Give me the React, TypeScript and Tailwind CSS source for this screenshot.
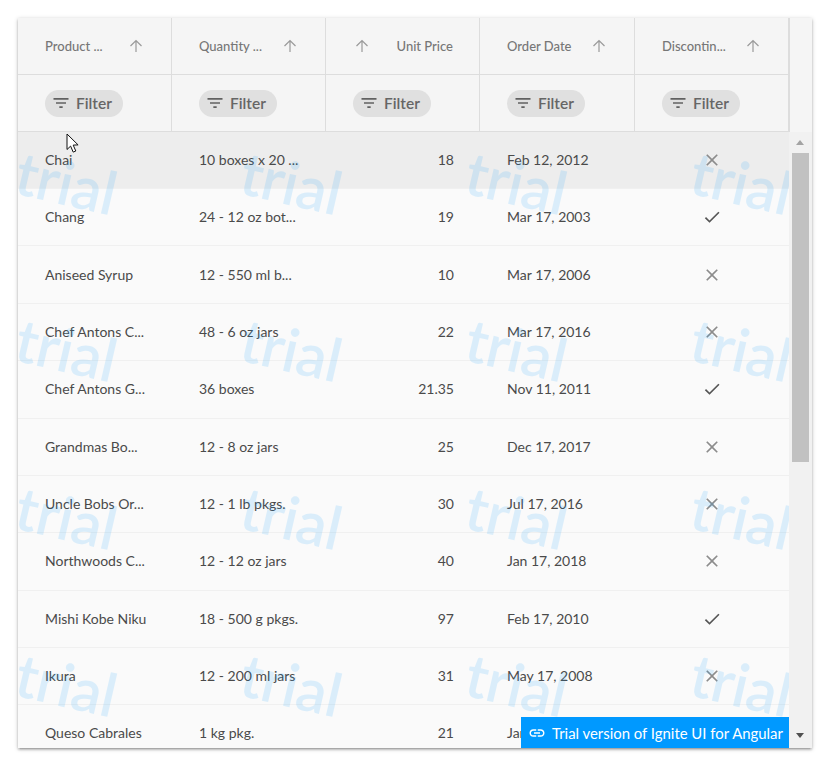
import React from "react";

const rows: { name: string; qty: string; price: string; date: string; ok: boolean }[] = [
  { name: "Chai", qty: "10 boxes x 20 ...", price: "18", date: "Feb 12, 2012", ok: false },
  { name: "Chang", qty: "24 - 12 oz bot...", price: "19", date: "Mar 17, 2003", ok: true },
  { name: "Aniseed Syrup", qty: "12 - 550 ml b...", price: "10", date: "Mar 17, 2006", ok: false },
  { name: "Chef Antons C...", qty: "48 - 6 oz jars", price: "22", date: "Mar 17, 2016", ok: false },
  { name: "Chef Antons G...", qty: "36 boxes", price: "21.35", date: "Nov 11, 2011", ok: true },
  { name: "Grandmas Bo...", qty: "12 - 8 oz jars", price: "25", date: "Dec 17, 2017", ok: false },
  { name: "Uncle Bobs Or...", qty: "12 - 1 lb pkgs.", price: "30", date: "Jul 17, 2016", ok: false },
  { name: "Northwoods C...", qty: "12 - 12 oz jars", price: "40", date: "Jan 17, 2018", ok: false },
  { name: "Mishi Kobe Niku", qty: "18 - 500 g pkgs.", price: "97", date: "Feb 17, 2010", ok: true },
  { name: "Ikura", qty: "12 - 200 ml jars", price: "31", date: "May 17, 2008", ok: false },
  { name: "Queso Cabrales", qty: "1 kg pkg.", price: "21", date: "Jan 17, 2011", ok: false },
];

const cols = "grid grid-cols-[154px_154px_154px_155px_154px]";

function ArrowUpIcon() {
  return (
    <svg width="18" height="18" viewBox="0 0 18 18" fill="none" stroke="#9a9a9a" strokeWidth="1.2" className="shrink-0">
      <path d="M9 15V3.5M3.5 9L9 3.5 14.5 9" />
    </svg>
  );
}

function FilterChip() {
  return (
    <div className="flex items-center w-[78px] h-[27px] rounded-full bg-[#e0e0e0] pl-[6px] gap-[5px] text-[15.5px] font-semibold text-[#666666]">
      <svg width="20" height="20" viewBox="0 0 24 24" fill="#616161" className="shrink-0">
        <path d="M10 18h4v-2h-4v2zM3 6v2h18V6H3zm3 7h12v-2H6v2z" />
      </svg>
      <span className="mt-[1px]">Filter</span>
    </div>
  );
}

function HeaderCell({ label, right }: { label: string; right?: boolean }) {
  return (
    <div className="flex items-center justify-between h-[57px] border-r border-b border-[#dddddd] pl-[27px] pr-[26px] text-[13px] font-medium text-[#777777]">
      {right ? (
        <>
          <ArrowUpIcon />
          <span className="mt-[1px]">{label}</span>
        </>
      ) : (
        <>
          <span className="mt-[1px]">{label}</span>
          <ArrowUpIcon />
        </>
      )}
    </div>
  );
}

export default function App() {
  return (
    <div className="w-[830px] h-[782px] bg-white pt-[18px] pl-[18px] font-['Lato','Liberation_Sans',sans-serif]">
      <div className="relative flex flex-col w-[794px] h-[730px] bg-[#f5f5f5] shadow-[0_1px_4px_0_rgba(0,0,0,0.26),0_2px_2px_0_rgba(0,0,0,0.14),0_3px_1px_-2px_rgba(0,0,0,0.1)]">
        <div className="flex flex-col w-[771px] border-r border-[#dddddd] box-content">
          <div className={cols}>
            <HeaderCell label="Product ..." />
            <HeaderCell label="Quantity ..." />
            <HeaderCell label="Unit Price" right />
            <HeaderCell label="Order Date" />
            <HeaderCell label="Discontin..." />
          </div>
          <div className={cols}>
            {[0, 1, 2, 3, 4].map((i) => (
              <div key={i} className="flex items-center h-[57px] border-r border-b border-[#dddddd] pl-[27px]">
                <FilterChip />
              </div>
            ))}
          </div>
        </div>
        <div className="flex flex-1 min-h-0">
          <div className="relative w-[771px] overflow-hidden bg-[#fafafa]">
            <div className="mt-[-0.3px]">
              {rows.map((r, i) => (
                <div key={r.name} className={`${cols} h-[57.36px] items-center border-b border-[#f0f0f0] text-[14px] text-[#4a4a4a] ${i === 0 ? "bg-[#ededed]" : ""}`}>
                  <div className="pl-[27px] pb-[1px] whitespace-nowrap">{r.name}</div>
                  <div className="pl-[27px] pb-[1px] whitespace-nowrap">{r.qty}</div>
                  <div className="pr-[26px] pb-[1px] text-right">{r.price}</div>
                  <div className="pl-[27px] pb-[1px] whitespace-nowrap">{r.date}</div>
                  <div className="flex justify-center">
                    {r.ok ? (
                      <svg width="20" height="20" viewBox="0 0 24 24" fill="#555555">
                        <path d="M9 16.17L4.83 12l-1.42 1.41L9 19 21 7l-1.41-1.41z" />
                      </svg>
                    ) : (
                      <svg width="20" height="20" viewBox="0 0 24 24" fill="#8c8c8c">
                        <path d="M19 6.41L17.59 5 12 10.59 6.41 5 5 6.41 10.59 12 5 17.59 6.41 19 12 13.41 17.59 19 19 17.59 13.41 12z" />
                      </svg>
                    )}
                  </div>
                </div>
              ))}
            </div>
            <div className="absolute left-[-63.5px] top-[-34px] grid grid-cols-[225px_225px_225px_225px] auto-rows-[167.5px] pointer-events-none">
              {Array.from({ length: 16 }).map((_, i) => (
                <div key={i} className="flex items-center justify-center">
                  <span className="rotate-[13deg] text-[60px] leading-none font-semibold tracking-[-0.5px] text-[#0099ff] opacity-[0.12]">trial</span>
                </div>
              ))}
            </div>
          </div>
          <div className="flex flex-col items-center w-[23px] bg-[#f1f1f1] pr-[1px]">
            <div className="flex items-center justify-center h-[21px] w-full">
              <div className="w-0 h-0 border-x-[4.5px] border-x-transparent border-b-[5px] border-b-[#a3a3a3]" />
            </div>
            <div className="w-[17px] h-[309px] bg-[#c1c1c1]" />
            <div className="flex-1" />
            <div className="flex items-center justify-center h-[26px] w-full">
              <div className="w-0 h-0 border-x-[4.5px] border-x-transparent border-t-[5px] border-t-[#505050]" />
            </div>
          </div>
        </div>
        <div className="absolute right-[23px] bottom-0 flex items-center w-[268px] h-[31px] bg-[#0099ff] pl-[7px] gap-[6px] text-[14.9px] text-white whitespace-nowrap">
          <svg width="18" height="18" viewBox="0 0 24 24" fill="white" className="shrink-0">
            <path d="M3.9 12c0-1.71 1.39-3.1 3.1-3.1h4V7H7c-2.76 0-5 2.24-5 5s2.24 5 5 5h4v-1.9H7c-1.71 0-3.1-1.39-3.1-3.1zM8 13h8v-2H8v2zm9-6h-4v1.9h4c1.71 0 3.1 1.39 3.1 3.1s-1.39 3.1-3.1 3.1h-4V17h4c2.76 0 5-2.24 5-5s-2.24-5-5-5z" />
          </svg>
          <span className="mt-[1px]">Trial version of Ignite UI for Angular</span>
        </div>
        <svg width="14" height="21" viewBox="0 0 14 21" className="absolute left-[48px] top-[115px]">
          <path d="M1 1v15.5l3.6-3.4 2.6 6 2.6-1.1-2.6-5.9 4.9-.2z" fill="white" stroke="#111" strokeWidth="1" />
        </svg>
      </div>
    </div>
  );
}
